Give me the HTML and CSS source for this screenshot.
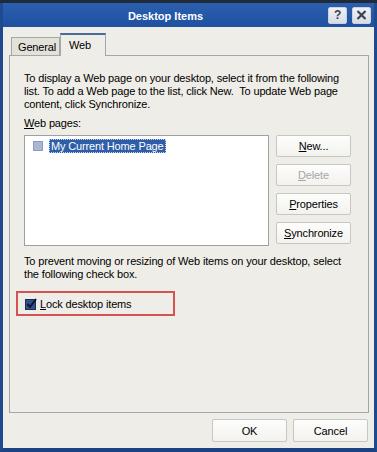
FILE: index.html
```html
<!DOCTYPE html>
<html lang="en">
<head>
  <meta charset="UTF-8" />
  <title>Desktop Items</title>
  <link rel="stylesheet" href="styles.css">
</head>
<body>
  <div class="window">
    <div class="titlebar">
      <div class="title">Desktop Items</div>
      <div class="title-buttons">
        <span class="tbtn">?</span>
        <span class="tbtn">
          <svg width="11" height="10" viewBox="0 0 11 10">
            <path d="M1.5 1 L9.5 9 M9.5 1 L1.5 9" stroke="#3c4250" stroke-width="2.2" fill="none"/>
          </svg>
        </span>
      </div>
    </div>

    <div class="client">
      <div class="tabs">
        <div class="tab">General</div>
        <div class="tab active">Web</div>
      </div>

      <div class="panel">
        <p class="desc">To display a Web page on your desktop, select it from the following<br>list. To add a Web page to the list, click New.&nbsp; To update Web page<br>content, click Synchronize.</p>

        <div class="label"><u>W</u>eb pages:</div>

        <div class="list-row">
          <div class="listbox">
            <div class="list-item">
              <span class="item-check"></span>
              <span class="item-text">My Current Home Page</span>
            </div>
          </div>
          <div class="side-buttons">
            <button class="btn"><u>N</u>ew...</button>
            <button class="btn" disabled><u>D</u>elete</button>
            <button class="btn"><u>P</u>roperties</button>
            <button class="btn"><u>S</u>ynchronize</button>
          </div>
        </div>

        <p class="desc second">To prevent moving or resizing of Web items on your desktop, select<br>the following check box.</p>

        <div class="lock-box">
          <svg class="lock-check" width="12" height="12" viewBox="0 0 12 12">
            <rect x="0.5" y="1.5" width="10" height="10" fill="#2f528f" stroke="#1a2e58"/>
            <path d="M2.5 6 L5 9 L11 1" stroke="#0b1530" stroke-width="2" fill="none"/>
          </svg>
          <span><u>L</u>ock desktop items</span>
        </div>
      </div>

      <div class="footer">
        <button class="btn">OK</button>
        <button class="btn">Cancel</button>
      </div>
    </div>
  </div>
</body>
</html>
```

FILE: styles.css
```css
html {
  background-color: #1f2b3a;
}

body {
  margin: 0;
  padding-top: 3px;
  font-family: "Liberation Sans", Arial, sans-serif;
  font-size: 11px;
  letter-spacing: -0.15px;
  color: #000;
}

.window {
  width: 377px;
  height: 449px;
  box-sizing: border-box;
  background-color: #1f4b8e;
  border-left: 3px solid #1f4b8e;
  border-right: 3px solid #1f4b8e;
  border-bottom: 4px solid #1b4282;
  display: flex;
  flex-direction: column;
}

.titlebar {
  height: 24px;
  display: flex;
  align-items: center;
  background: linear-gradient(#2c5fae, #2356a6 60%, #2151a0);
}

.title {
  flex: 1;
  text-align: center;
  color: #fff;
  font-weight: bold;
  font-size: 11px;
  letter-spacing: 0;
  padding-top: 1px;
}

.title-buttons {
  display: flex;
  gap: 5px;
  padding-right: 3px;
}

.tbtn {
  width: 19px;
  height: 17px;
  box-sizing: border-box;
  display: flex;
  align-items: center;
  justify-content: center;
  background: linear-gradient(#eef0f5, #d7dce6);
  border: 1px solid #c9d2e2;
  border-radius: 2px;
  color: #3c4250;
  font-weight: bold;
  font-size: 12px;
}

.client {
  flex: 1;
  background-color: #efede7;
  padding: 6px 5px 0 6px;
  display: flex;
  flex-direction: column;
}

.tabs {
  display: flex;
  align-items: flex-end;
  height: 22px;
  padding-left: 2px;
}

.tab {
  height: 18px;
  box-sizing: border-box;
  padding: 3px 6px 0 6px;
  border: 1px solid #a3a7ab;
  border-bottom: none;
  background-color: #e4e1d9;
  width: 49px;
}

.tab.active {
  position: relative;
  z-index: 1;
  height: 23px;
  width: 46px;
  margin-bottom: -1px;
  padding: 4px 0 0 8px;
  background-color: #efede7;
  border-top: 2px solid #4a6a98;
}

.panel {
  height: 358px;
  box-sizing: border-box;
  border: 1px solid #a3a7ab;
  padding: 16px 14px 0 14px;
}

.desc {
  margin: 0;
  line-height: 13px;
}

.label {
  margin-top: 6px;
  line-height: 13px;
}

.list-row {
  display: flex;
  gap: 7px;
  margin-top: 5px;
}

.listbox {
  width: 245px;
  height: 111px;
  box-sizing: border-box;
  background-color: #fff;
  border: 1px solid #a0a0a0;
  padding: 3px 0 0 8px;
}

.list-item {
  display: flex;
  align-items: center;
  gap: 6px;
}

.item-check {
  width: 10px;
  height: 10px;
  box-sizing: border-box;
  background-color: #a9b7d3;
  border: 1px solid #8d9cbd;
}

.item-text {
  background-color: #2f5ea8;
  color: #fff;
  padding: 0 2px 0 2px;
  line-height: 14px;
  outline: 1px dotted #c8d4ea;
  outline-offset: -1px;
}

.side-buttons {
  display: flex;
  flex-direction: column;
  gap: 7px;
}

.btn {
  width: 75px;
  height: 22px;
  padding: 0;
  font-family: inherit;
  font-size: 11px;
  letter-spacing: inherit;
  color: #000;
  background: linear-gradient(#fdfdfc, #f3f2ee);
  border: 1px solid #c6c6c2;
  border-radius: 2px;
}

.btn:disabled {
  color: #a6a6a2;
}

.second {
  margin-top: 9px;
}

.lock-box {
  margin: 10px 0 0 -8px;
  width: 159px;
  height: 25px;
  box-sizing: border-box;
  border: 2px solid #d65353;
  display: flex;
  align-items: center;
  gap: 3px;
  padding-left: 7px;
}

.footer {
  display: flex;
  justify-content: flex-end;
  gap: 6px;
  margin-top: 6px;
  padding-right: 1px;
}

.footer .btn {
  height: 23px;
}
```
